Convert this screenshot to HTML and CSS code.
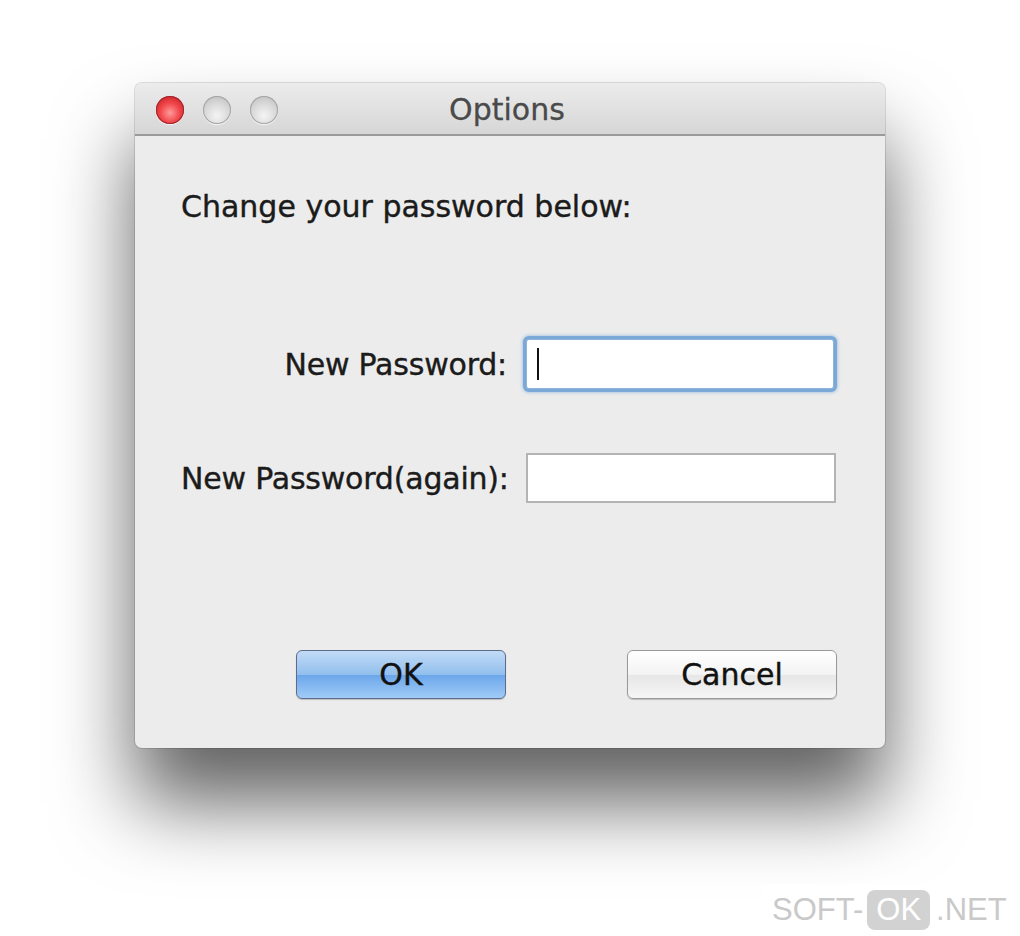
FILE: index.html
```html
<!DOCTYPE html>
<html lang="en">
<head>
    <meta charset="UTF-8">
    <meta name="viewport" content="width=device-width, initial-scale=1.0">
    <title>Options</title>
    <link rel="stylesheet" href="styles.css">
</head>
<body>
    <div class="window">
        <div class="titlebar">
            <div class="lights">
                <span class="light close"></span>
                <span class="light"></span>
                <span class="light"></span>
            </div>
            <div class="title">Options</div>
        </div>

        <div class="content">
            <p class="intro">Change your password below:</p>

            <form class="fields">
                <label class="field-label" for="pw1">New Password:</label>
                <div class="input focused"><input id="pw1" type="password"><span class="caret"></span></div>

                <label class="field-label" for="pw2">New Password(again):</label>
                <div class="input"><input id="pw2" type="password"></div>
            </form>

            <div class="buttons">
                <button class="btn btn-default" type="button">OK</button>
                <button class="btn" type="button">Cancel</button>
            </div>
        </div>
    </div>

    <div class="watermark">SOFT-<span class="ok">OK</span>.NET</div>
</body>
</html>
```

FILE: styles.css
```css
body {
    margin: 0;
    background: #fff;
    font-family: "DejaVu Sans", Verdana, sans-serif;
    color: #1b1b1b;
    min-height: 936px;
    position: relative;
    overflow: hidden;
}
.window {
    margin: 83px 0 0 135px;
    width: 750px;
    height: 665px;
    background: #ececec;
    border-radius: 7px;
    box-shadow: 0 55px 80px rgba(0, 0, 0, 0.62), 0 0 0 1px rgba(0, 0, 0, 0.12);
    display: flex;
    flex-direction: column;
    overflow: hidden;
}
.titlebar {
    height: 51px;
    flex: none;
    position: relative;
    display: flex;
    align-items: center;
    justify-content: center;
    background: linear-gradient(#ececec, #d6d6d6);
    border-bottom: 2px solid #9a9a9a;
}
.lights {
    position: absolute;
    left: 21px;
    top: 13px;
    display: flex;
    gap: 19px;
}
.light {
    width: 28px;
    height: 28px;
    border-radius: 50%;
    background: radial-gradient(circle at 50% 70%, #f4f4f4 0, #dcdcdc 45%, #b9b9b9 100%);
    box-shadow: inset 0 0 0 1px #a4a4a4, 0 1px 1px rgba(255, 255, 255, 0.8);
}
.light.close {
    background: radial-gradient(circle at 50% 60%, #ff9a9a 0, #f0464a 45%, #b9141b 100%);
    box-shadow: inset 0 0 0 1px #a0242a, 0 1px 1px rgba(255, 255, 255, 0.8);
}
.title {
    font-size: 30px;
    color: #4a4a4a;
    margin: 2px 6px 0 0;
    -webkit-text-stroke: 0.3px #4a4a4a;
}
.content {
    flex: 1;
    padding: 0 48px 0 46px;
    display: flex;
    flex-direction: column;
    -webkit-text-stroke: 0.4px #1b1b1b;
}
.intro {
    margin: 53px 0 0;
    font-size: 30px;
}
.fields {
    margin-top: 115px;
    display: grid;
    grid-template-columns: 326px 310px;
    column-gap: 19px;
    row-gap: 64px;
    align-items: center;
}
.field-label {
    text-align: right;
    font-size: 30px;
    letter-spacing: -0.2px;
    white-space: nowrap;
}
.input {
    height: 50px;
    box-sizing: border-box;
    background: #fff;
    border: 2px solid #b4b4b4;
    position: relative;
}
.input input {
    border: none;
    outline: none;
    background: transparent;
    width: 100%;
    height: 100%;
    padding: 0 12px;
    box-sizing: border-box;
}
.input.focused {
    border: 1px solid #8fb4d8;
    box-shadow: 0 0 0 3px #7aa9d8, 0 0 3px 4px rgba(122, 169, 216, 0.5);
    border-radius: 3px;
    margin: 0 2px 0 0;
}
.caret {
    position: absolute;
    left: 10px;
    top: 8px;
    width: 2px;
    height: 32px;
    background: #111;
}
.buttons {
    margin-top: 147px;
    display: flex;
    justify-content: space-between;
    padding-left: 115px;
}
.btn {
    width: 210px;
    height: 49px;
    font-family: inherit;
    font-size: 30px;
    color: #111;
    -webkit-text-stroke: 0.4px #111;
    border: 1px solid #9a9a9a;
    border-radius: 6px;
    background: linear-gradient(#ffffff, #f3f3f3 50%, #e6e6e6 51%, #f6f6f6);
    box-shadow: 0 1px 1px rgba(0, 0, 0, 0.2);
    padding: 0;
}
.btn-default {
    border-color: #5b6c8c;
    background: linear-gradient(#c2dbf6, #92bfee 50%, #6ba6ea 51%, #a0cbf7);
}
.watermark {
    position: absolute;
    right: 0;
    bottom: 0;
    width: 258px;
    height: 52px;
    background: #fff;
    font-family: "Liberation Sans", Arial, sans-serif;
    font-size: 31px;
    color: #c9c9c9;
    display: flex;
    align-items: center;
    padding-left: 10px;
    box-sizing: border-box;
}
.ok {
    display: inline-block;
    background: #d2d2d2;
    color: #fff;
    border-radius: 8px;
    padding: 2px 9px;
    margin: 0 6px 0 4px;
}
```
